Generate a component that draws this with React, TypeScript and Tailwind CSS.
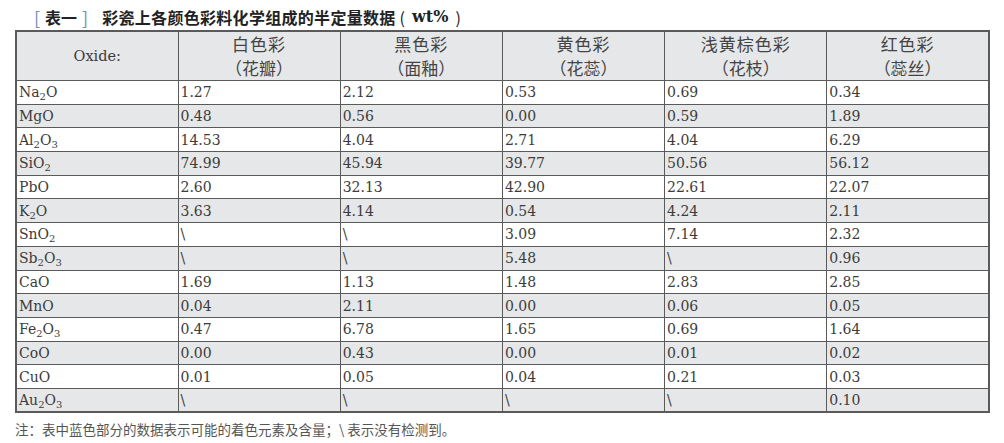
const cols = [
  ["白色彩", "（花瓣）"],
  ["黑色彩", "（面釉）"],
  ["黄色彩", "（花蕊）"],
  ["浅黄棕色彩", "（花枝）"],
  ["红色彩", "（蕊丝）"],
];

// oxide formula parts: plain strings, subscripts in a one-item array
const rows: { ox: (string | [string])[]; v: string[] }[] = [
  { ox: ["Na", ["2"], "O"], v: ["1.27", "2.12", "0.53", "0.69", "0.34"] },
  { ox: ["MgO"], v: ["0.48", "0.56", "0.00", "0.59", "1.89"] },
  { ox: ["Al", ["2"], "O", ["3"]], v: ["14.53", "4.04", "2.71", "4.04", "6.29"] },
  { ox: ["SiO", ["2"]], v: ["74.99", "45.94", "39.77", "50.56", "56.12"] },
  { ox: ["PbO"], v: ["2.60", "32.13", "42.90", "22.61", "22.07"] },
  { ox: ["K", ["2"], "O"], v: ["3.63", "4.14", "0.54", "4.24", "2.11"] },
  { ox: ["SnO", ["2"]], v: ["\\", "\\", "3.09", "7.14", "2.32"] },
  { ox: ["Sb", ["2"], "O", ["3"]], v: ["\\", "\\", "5.48", "\\", "0.96"] },
  { ox: ["CaO"], v: ["1.69", "1.13", "1.48", "2.83", "2.85"] },
  { ox: ["MnO"], v: ["0.04", "2.11", "0.00", "0.06", "0.05"] },
  { ox: ["Fe", ["2"], "O", ["3"]], v: ["0.47", "6.78", "1.65", "0.69", "1.64"] },
  { ox: ["CoO"], v: ["0.00", "0.43", "0.00", "0.01", "0.02"] },
  { ox: ["CuO"], v: ["0.01", "0.05", "0.04", "0.21", "0.03"] },
  { ox: ["Au", ["2"], "O", ["3"]], v: ["\\", "\\", "\\", "\\", "0.10"] },
];

const serif = { fontFamily: '"DejaVu Serif", "Liberation Serif", "Noto Sans CJK SC", serif' };
const cjk = { fontFamily: '"Noto Sans CJK SC", sans-serif' };

export default function App() {
  return (
    <div className="w-[1004px] h-[443px] bg-white text-[#3c3c3c] overflow-hidden" style={serif}>
      <div className="pl-[34px] pt-[4px] h-[30px] flex items-center text-[16px] font-bold text-[#222]" style={cjk}>
        <span className="font-normal text-[#7391b3] text-[18px]">[</span>
        <span className="mx-[5px]">表一</span>
        <span className="font-normal text-[#7391b3] text-[18px] mr-[14px]">]</span>
        <span className="tracking-[0.3px]">彩瓷上各颜色彩料化学组成的半定量数据</span>
        <span className="font-normal ml-[4px]">(</span>
        <span className="mx-[7px]" style={serif}>wt%</span>
        <span className="font-normal">)</span>
      </div>
      <div className="pl-[15px]">
        <table className="w-[975px] table-fixed border-collapse border-2 border-[#5a5a5a] text-[14px] leading-none">
          <thead>
            <tr className="h-[49px] bg-[#e6e7e8]">
              <th className="border border-[#5a5a5a] font-normal text-[14.5px] w-[162px]">Oxide:</th>
              {cols.map((c) => (
                <th key={c[0]} className="border border-[#5a5a5a] font-normal text-[17px] leading-[24px] text-[#444]" style={cjk}>
                  <div className="tracking-[1px]">{c[0]}</div>
                  <div>{c[1]}</div>
                </th>
              ))}
            </tr>
          </thead>
          <tbody>
            {rows.map((r, i) => (
              <tr key={i} className={`h-[23.7px] ${i % 2 === 1 ? "bg-[#e6e7e8]" : "bg-white"}`}>
                <td className="border border-[#5a5a5a] pl-[2px]">
                  {r.ox.map((p, j) =>
                    typeof p === "string" ? (
                      <span key={j}>{p}</span>
                    ) : (
                      <sub key={j} className="text-[10px] relative top-[3px]">{p[0]}</sub>
                    )
                  )}
                </td>
                {r.v.map((v, j) => (
                  <td key={j} className="border border-[#5a5a5a] pl-[2px]">{v}</td>
                ))}
              </tr>
            ))}
          </tbody>
        </table>
      </div>
      <div className="pl-[15px] pt-[7px] text-[13.5px] leading-[18px] text-[#555]" style={cjk}>
        注：表中蓝色部分的数据表示可能的着色元素及含量；\ 表示没有检测到。
      </div>
    </div>
  );
}
